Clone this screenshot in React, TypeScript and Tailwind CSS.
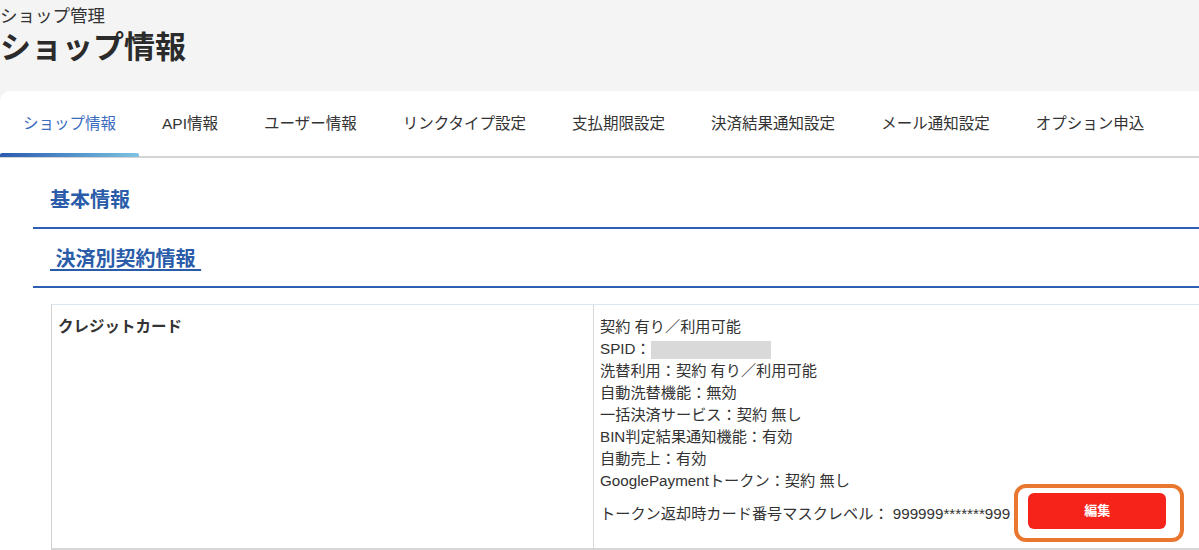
const tabs = [
  'ショップ情報',
  'API情報',
  'ユーザー情報',
  'リンクタイプ設定',
  '支払期限設定',
  '決済結果通知設定',
  'メール通知設定',
  'オプション申込',
];

const font = { fontFamily: '"Liberation Sans", "Noto Sans CJK JP", sans-serif' };

export default function App() {
  return (
    <div className="h-[550px] w-full overflow-hidden bg-[#f4f4f4] text-[#333]" style={font}>
      {/* page header */}
      <div className="pt-[4px] pb-[23px]">
        <div className="text-[17.5px] leading-[24px]">ショップ管理</div>
        <h1 className="text-[31px] font-bold leading-[40px] text-[#2b2b2b]">ショップ情報</h1>
      </div>

      <div className="h-full rounded-tl-[10px] bg-white">
        <nav className="flex border-b-2 border-[#d4d4d4]">
          {tabs.map((tab, i) => (
            <div
              key={tab}
              className={`relative flex h-[65px] items-center px-[23px] text-[15.5px] ${
                i === 0 ? 'text-[#3a6cc0]' : 'text-[#333]'
              }`}
            >
              {tab}
              {i === 0 && (
                <span className="absolute bottom-[-1px] left-0 right-0 z-10 h-[4px] rounded-t-[2px] bg-gradient-to-r from-[#2a5bb0] to-[#7fc2e0]" />
              )}
            </div>
          ))}
        </nav>

        <div className="pl-[33px]">
          <div className="mt-[12px] flex h-[59px] items-center border-b-2 border-[#2d5fb3] pl-[17px] pt-[3px]">
            <h2 className="text-[20px] font-bold text-[#2a5caa]">基本情報</h2>
          </div>
          <div className="flex h-[59px] items-center border-b-2 border-[#2d5fb3] pl-[17px] pt-[2px]">
            <h2 className="text-[20px] font-bold text-[#2a5caa] underline underline-offset-[3px]">
              &nbsp;決済別契約情報&nbsp;
            </h2>
          </div>

          <div className="ml-[18px] mt-[16px] grid grid-cols-[542px_1fr] border-t border-l border-b-2 border-t-[#dce6f0] border-l-[#d2d2d2] border-b-[#d6d6d6]">
            <div className="border-r border-[#d8d8d8] pl-[6px] pt-[11px] text-[15.5px] font-bold leading-[22px]">
              クレジットカード
            </div>
            <div className="pl-[6px] pt-[11px] pb-[12px] text-[15.2px] leading-[22px]">
              <div>契約 有り／利用可能</div>
              <div>
                SPID：<span className="inline-block h-[18px] w-[120px] bg-[#d9d9d9] align-middle" />
              </div>
              <div>洗替利用：契約 有り／利用可能</div>
              <div>自動洗替機能：無効</div>
              <div>一括決済サービス：契約 無し</div>
              <div>BIN判定結果通知機能：有効</div>
              <div>自動売上：有効</div>
              <div>GooglePaymentトークン：契約 無し</div>
              <div className="flex h-[44px] items-center">
                <span>トークン返却時カード番号マスクレベル： 999999*******999</span>
                <div className="relative ml-[18px] mb-[6px]">
                  <button className="flex h-[36px] w-[138px] items-center justify-center rounded-[6px] bg-[#f5231a] text-[13px] font-bold text-white">
                    編集
                  </button>
                  <span className="pointer-events-none absolute -left-[14px] -right-[18px] -top-[9px] -bottom-[13px] rounded-[12px] border-4 border-[#e9772f]" />
                </div>
              </div>
            </div>
          </div>
        </div>
      </div>
    </div>
  );
}
